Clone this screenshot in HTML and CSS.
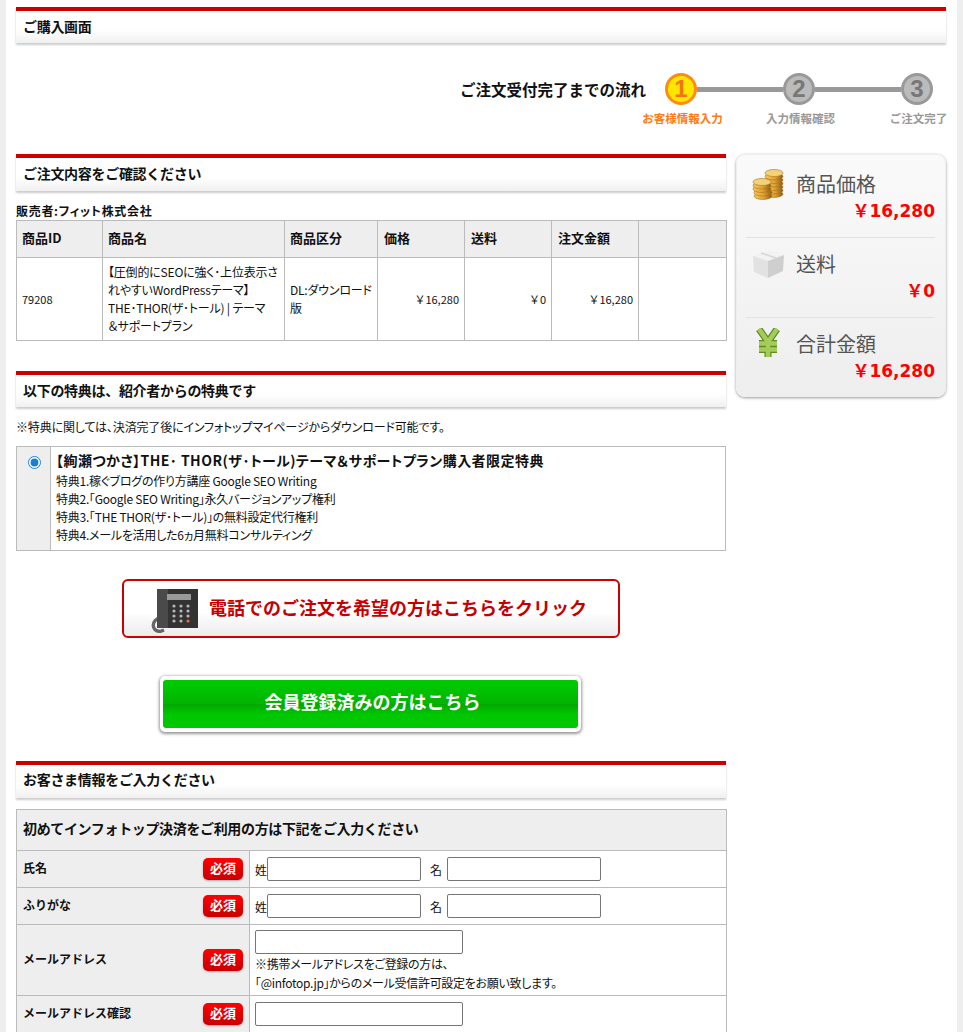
FILE: index.html
```html
<!DOCTYPE html>
<html lang="ja">
<head>
<meta charset="utf-8">
<title>ご購入画面</title>
<link rel="stylesheet" href="styles.css">
</head>
<body>
<div class="page">
  <h1 class="head head-first">ご購入画面</h1>

  <div class="flow">
    <div class="flow-title">ご注文受付完了までの流れ</div>
    <div class="flow-steps">
      <div class="step step-on"><span class="step-num">1</span><span class="step-label">お客様情報入力</span></div>
      <span class="step-line"></span>
      <div class="step"><span class="step-num">2</span><span class="step-label">入力情報確認</span></div>
      <span class="step-line"></span>
      <div class="step"><span class="step-num">3</span><span class="step-label">ご注文完了</span></div>
    </div>
  </div>

  <div class="main">
    <div class="left">
      <h2 class="head">ご注文内容をご確認ください</h2>
      <div class="seller">販売者:フィット株式会社</div>
      <table class="grid order">
        <thead>
          <tr><th class="c-id">商品ID</th><th class="c-name">商品名</th><th class="c-type">商品区分</th><th class="c-num">価格</th><th class="c-num">送料</th><th class="c-num">注文金額</th><th class="c-end"></th></tr>
        </thead>
        <tbody>
          <tr>
            <td class="id">79208</td>
            <td>【圧倒的にSEOに強く･上位表示さ<br>れやすいWordPressテーマ】<br>THE･THOR(ザ･トール) | テーマ<br>＆サポートプラン</td>
            <td>DL:ダウンロード<br>版</td>
            <td class="num">￥16,280</td>
            <td class="num">￥0</td>
            <td class="num">￥16,280</td>
            <td></td>
          </tr>
        </tbody>
      </table>

      <h2 class="head head-benefit">以下の特典は、紹介者からの特典です</h2>
      <p class="benefit-note">※特典に関しては、決済完了後にインフォトップマイページからダウンロード可能です。</p>
      <div class="benefit">
        <div class="benefit-radio"><input type="radio" name="benefit" checked></div>
        <div class="benefit-body">
          <div class="benefit-title">【絢瀬つかさ】THE･ THOR(ザ･トール)テーマ＆サポートプラン購入者限定特典</div>
          特典1.稼ぐブログの作り方講座 Google SEO Writing<br>
          特典2.｢Google SEO Writing｣永久バージョンアップ権利<br>
          特典3.｢THE THOR(ザ･トール)｣の無料設定代行権利<br>
          特典4.メールを活用した6ヵ月無料コンサルティング
        </div>
      </div>

      <a class="tel-btn" href="#">
        <svg class="tel-icon" viewBox="0 0 48 44" width="48" height="44" aria-hidden="true">
          <path d="M9 29 C0 31 0 42 9 42.5 L13 41" fill="none" stroke="#666" stroke-width="3.4"/>
          <rect x="6" y="0" width="41" height="39" fill="#333"/>
          <rect x="6" y="0" width="11" height="39" fill="#4a4a4a"/>
          <rect x="16" y="5" width="24" height="6" fill="#999"/>
          <g fill="#b5b5b5">
            <circle cx="23" cy="17" r="1.6"/><circle cx="30" cy="17" r="1.6"/><circle cx="37" cy="17" r="1.6"/>
            <circle cx="23" cy="22" r="1.6"/><circle cx="30" cy="22" r="1.6"/><circle cx="37" cy="22" r="1.6"/>
            <circle cx="23" cy="27" r="1.6"/><circle cx="30" cy="27" r="1.6"/><circle cx="37" cy="27" r="1.6"/>
            <circle cx="23" cy="32" r="1.6"/><circle cx="30" cy="32" r="1.6"/>
          </g>
          <circle cx="37" cy="32" r="1.6" fill="#e8702a"/>
        </svg>
        <span class="tel-text">電話でのご注文を希望の方はこちらをクリック</span>
      </a>

      <a class="member-btn" href="#"><span>会員登録済みの方はこちら</span></a>

      <h2 class="head head-form">お客さま情報をご入力ください</h2>
      <table class="grid form">
        <colgroup><col class="col-label"><col class="col-val"></colgroup>
        <thead>
          <tr><th colspan="2" class="form-head">初めてインフォトップ決済をご利用の方は下記をご入力ください</th></tr>
        </thead>
        <tbody>
          <tr class="row-s">
            <th class="f-label"><div class="f-label-in"><span class="f-label-text">氏名</span><span class="req">必須</span></div></th>
            <td class="f-val"><div class="name-fields">姓<input class="in-name" type="text"><span class="name-second">名</span><input class="in-name" type="text"></div></td>
          </tr>
          <tr class="row-s">
            <th class="f-label"><div class="f-label-in"><span class="f-label-text">ふりがな</span><span class="req">必須</span></div></th>
            <td class="f-val"><div class="name-fields">姓<input class="in-name" type="text"><span class="name-second">名</span><input class="in-name" type="text"></div></td>
          </tr>
          <tr>
            <th class="f-label"><div class="f-label-in"><span class="f-label-text">メールアドレス</span><span class="req">必須</span></div></th>
            <td class="f-val f-mail"><input class="in-mail" type="text"><div class="mail-note">※携帯メールアドレスをご登録の方は、<br>｢@infotop.jp｣からのメール受信許可設定をお願い致します。</div></td>
          </tr>
          <tr class="row-s">
            <th class="f-label"><div class="f-label-in"><span class="f-label-text">メールアドレス確認</span><span class="req">必須</span></div></th>
            <td class="f-val"><input class="in-mail" type="text"></td>
          </tr>
        </tbody>
      </table>
    </div>

    <aside class="side">
      <div class="sum sum-first">
        <div class="sum-head">
          <svg class="sum-icon" viewBox="0 0 32 32" width="32" height="32" aria-hidden="true">
            <defs>
              <linearGradient id="gold" x1="0" x2="1" y1="0" y2="0"><stop offset="0" stop-color="#f6c95a"/><stop offset=".55" stop-color="#e0a030"/><stop offset="1" stop-color="#8a5a14"/></linearGradient>
            </defs>
            <g fill="url(#gold)" stroke="#a8741c" stroke-width=".6">
              <ellipse cx="22" cy="26" rx="9" ry="3.5"/><ellipse cx="22" cy="22.5" rx="9" ry="3.5"/><ellipse cx="22" cy="19" rx="9" ry="3.5"/><ellipse cx="22" cy="15.5" rx="9" ry="3.5"/><ellipse cx="22" cy="12" rx="9" ry="3.5"/><ellipse cx="22" cy="8.5" rx="9" ry="3.5"/>
              <ellipse cx="22" cy="5" rx="9" ry="3.5" fill="#f3d27a"/>
              <ellipse cx="11" cy="28" rx="9" ry="3.5"/><ellipse cx="11" cy="24.5" rx="9" ry="3.5"/><ellipse cx="10" cy="21" rx="9" ry="3.5"/><ellipse cx="10" cy="17.5" rx="9" ry="3.5"/>
              <ellipse cx="10" cy="14" rx="9" ry="3.5" fill="#f3d27a"/>
            </g>
          </svg>
          <span class="sum-title">商品価格</span>
        </div>
        <div class="sum-price">￥16,280</div>
      </div>
      <div class="sum">
        <div class="sum-head">
          <svg class="sum-icon" viewBox="0 0 32 32" width="32" height="32" aria-hidden="true">
            <path d="M1 8 L17 2 L32 7 L16 13 Z" fill="#f2f2f2"/>
            <path d="M1 8 L16 13 L16 30 L2 24 Z" fill="#e2e2e2"/>
            <path d="M16 13 L32 7 L31 23 L16 30 Z" fill="#cfcfcf"/>
            <path d="M9 5 L24 10" stroke="#d5d5d5" stroke-width="1.5"/>
          </svg>
          <span class="sum-title">送料</span>
        </div>
        <div class="sum-price">￥0</div>
      </div>
      <div class="sum sum-last">
        <div class="sum-head">
          <svg class="sum-icon" viewBox="0 0 32 32" width="32" height="32" aria-hidden="true">
            <g fill="none" stroke-linecap="butt">
              <path d="M7 1 L16 14 L25 1 M16 14 V29 M7 15.5 H25 M7 21.5 H25" stroke="#5f8a24" stroke-width="7"/>
              <path d="M7 1 L16 14 L25 1 M16 14 V29 M7 15.5 H25 M7 21.5 H25" stroke="#a3cc58" stroke-width="4.6"/>
            </g>
          </svg>
          <span class="sum-title">合計金額</span>
        </div>
        <div class="sum-price">￥16,280</div>
      </div>
    </aside>
  </div>
</div>
</body>
</html>
```

FILE: styles.css
```css
* { box-sizing: border-box; }
html { background: #eeeeee; overflow: hidden; }
body {
  margin: 0;
  height: 1032px;
  overflow: hidden;
  font-family: "Noto Sans CJK JP", "Liberation Sans", sans-serif;
  font-size: 12px;
  color: #111;
}
.page {
  margin: 0 6px;
  background: #fff;
  height: 1032px;
  padding: 7px 11px 0 10px;
}
.head {
  margin: 0;
  height: 37px;
  padding: 0 7px;
  border-top: 4px solid #cc0000;
  background: linear-gradient(#fff 60%, #f0f0f0);
  box-shadow: 0 2px 2px #cccccc;
  font-size: 14px;
  font-weight: 700;
  line-height: 31px;
  letter-spacing: -.3px;
}
.head-first { height: 36px; }
.head-benefit { margin-top: 30px; height: 36px; }
.head-form { margin-top: 29px; line-height: 29px; }

/* flow */
.flow {
  display: flex;
  justify-content: flex-end;
  padding: 30px 13px 0 0;
  height: 111px;
}
.flow-title {
  margin-right: 19px;
  font-size: 15.5px;
  font-weight: 700;
  line-height: 32px;
}
.flow-steps { display: flex; align-items: flex-start; }
.step {
  width: 32px;
  display: flex;
  flex-direction: column;
  align-items: center;
}
.step-num {
  width: 32px;
  height: 32px;
  border: 3px solid #999;
  border-radius: 50%;
  background: #bbb;
  color: #777;
  font-family: "Liberation Sans", sans-serif;
  font-size: 24px;
  font-weight: 700;
  line-height: 26px;
  text-align: center;
}
.step-label {
  margin-top: 4px;
  padding-left: 3px;
  font-size: 11.5px;
  font-weight: 700;
  line-height: 18px;
  color: #999;
  white-space: nowrap;
}
.step-on .step-num { border-color: #ff8a14; background: #ffe600; color: #f47414; }
.step-on .step-label { color: #ff7a10; }
.step-line { width: 86px; height: 5px; margin-top: 14px; background: #999; }

/* columns */
.main { display: flex; gap: 10px; align-items: flex-start; }
.left { width: 710px; flex: none; }
.side {
  width: 210px;
  flex: none;
  height: 243px;
  padding: 0 10px 0 9px;
  border: 1px solid #eeeeee;
  border-radius: 9px;
  background: linear-gradient(#fafafa, #eeeeee);
  box-shadow: 0 1px 3px #999;
}
.sum { height: 80px; padding-top: 11px; border-bottom: 1px solid #e2e2e2; }
.sum-first { height: 83px; padding-top: 14px; }
.sum-last { border-bottom: 0; }
.sum-head { display: flex; align-items: center; height: 30px; padding-left: 6px; }
.sum-icon { margin-right: 12px; flex: none; }
.sum-title { font-size: 20px; line-height: 30px; color: #555; }
.sum-price {
  height: 24px;
  font-family: "DejaVu Sans", "Noto Sans CJK JP", sans-serif;
  font-size: 17px;
  font-weight: 700;
  line-height: 24px;
  text-align: right;
  color: #ff0000;
}

/* tables */
.seller {
  height: 29px;
  padding-top: 11px;
  font-feature-settings: "palt";
  font-weight: 700;
  line-height: 18px;
  letter-spacing: .7px;
}
.grid { width: 710px; table-layout: fixed; border-collapse: collapse; }
.grid th, .grid td { border: 1px solid #bbbbbb; }
.grid th { background: #eeeeee; text-align: left; font-weight: 700; }
.order th { height: 37px; padding: 0 5px 3px; font-size: 13px; }
.order .c-num { padding-left: 6px; }
.order td {
  height: 83px;
  padding: 0 5px;
  font-feature-settings: "palt";
  line-height: 18px;
  letter-spacing: -.2px;
  white-space: nowrap;
}
.c-id { width: 86px; }
.c-name { width: 182px; }
.c-type { width: 93px; }
.c-num { width: 87px; }
.c-end { width: 88px; }
.order .id, .order .num {
  font-size: 11px;
  font-feature-settings: normal;
  letter-spacing: 0;
}
.order .num { text-align: right; }

/* benefit */
.benefit-note {
  margin: 0;
  padding-top: 11px;
  height: 39px;
  font-feature-settings: "palt";
  line-height: 18px;
  letter-spacing: -.15px;
}
.benefit {
  display: flex;
  height: 105px;
  border: 1px solid #bbbbbb;
}
.benefit-radio {
  width: 34px;
  flex: none;
  padding: 8px 0 0 2px;
  text-align: center;
  background: #eeeeee;
  border-right: 1px solid #bbbbbb;
}
.benefit-radio input { margin: 0; width: 13px; height: 13px; accent-color: #1a7fd0; }
.benefit-body {
  padding: 2px 5px;
  font-feature-settings: "palt";
  line-height: 18px;
  letter-spacing: -.25px;
}
.benefit-title { font-size: 14px; font-weight: 700; line-height: 23px; letter-spacing: .45px; }

/* buttons */
.tel-btn {
  display: flex;
  align-items: center;
  width: 498px;
  height: 59px;
  margin: 28px 0 0 106px;
  padding-left: 27px;
  border: 2px solid #cc0000;
  border-radius: 6px;
  background: linear-gradient(#fff 55%, #ececec);
  color: #c40000;
  font-size: 18px;
  font-weight: 700;
  text-decoration: none;
}
.tel-icon { flex: none; margin: 4px 10px 0 0; }
.tel-text { padding-bottom: 3px; }
.member-btn {
  display: block;
  width: 421px;
  height: 56px;
  margin: 38px 0 0 144px;
  padding: 4px 3px;
  border-radius: 5px;
  background: #fff;
  box-shadow: 0 1px 3px 1px #999;
  text-decoration: none;
}
.member-btn span {
  display: block;
  height: 48px;
  padding-left: 4px;
  border-radius: 3px;
  background: linear-gradient(#00c800 0 10%, #00b400 49%, #00a800 50%, #00c800 72%);
  color: #fff;
  font-size: 18px;
  font-weight: 700;
  line-height: 43px;
  text-align: center;
}

/* form */
.form { margin-top: 11px; }
.col-label { width: 233px; }
.col-val { width: 477px; }
.form-head { height: 41px; padding: 0 6px 5px; font-size: 14px; letter-spacing: -.35px; }
.row-s th, .row-s td { height: 37px; }
.f-label { padding: 0 6px; font-size: 12px; }
.f-label-in { display: flex; align-items: center; justify-content: space-between; }
.f-label-text { padding-bottom: 3px; }
.req {
  width: 40px;
  height: 22px;
  border-radius: 5px;
  background: linear-gradient(#ff0000, #c80000);
  box-shadow: 0 1px 2px #aaa;
  color: #fff;
  font-size: 13px;
  line-height: 20px;
  text-align: center;
}
.f-val { padding: 0 5px; font-weight: 400; }
.name-fields { display: flex; align-items: center; }
.in-name, .in-mail {
  height: 24px;
  margin: 0;
  padding: 0 2px;
  border: 1px solid #767676;
  border-radius: 2px;
  background: #fff;
}
.in-name { width: 154px; }
.in-mail { display: block; width: 208px; }
.name-second { margin: 0 5px 0 9px; }
.f-mail { padding-top: 5px; padding-bottom: 3px; }
.mail-note { font-feature-settings: "palt"; line-height: 19px; letter-spacing: -.3px; }
```
